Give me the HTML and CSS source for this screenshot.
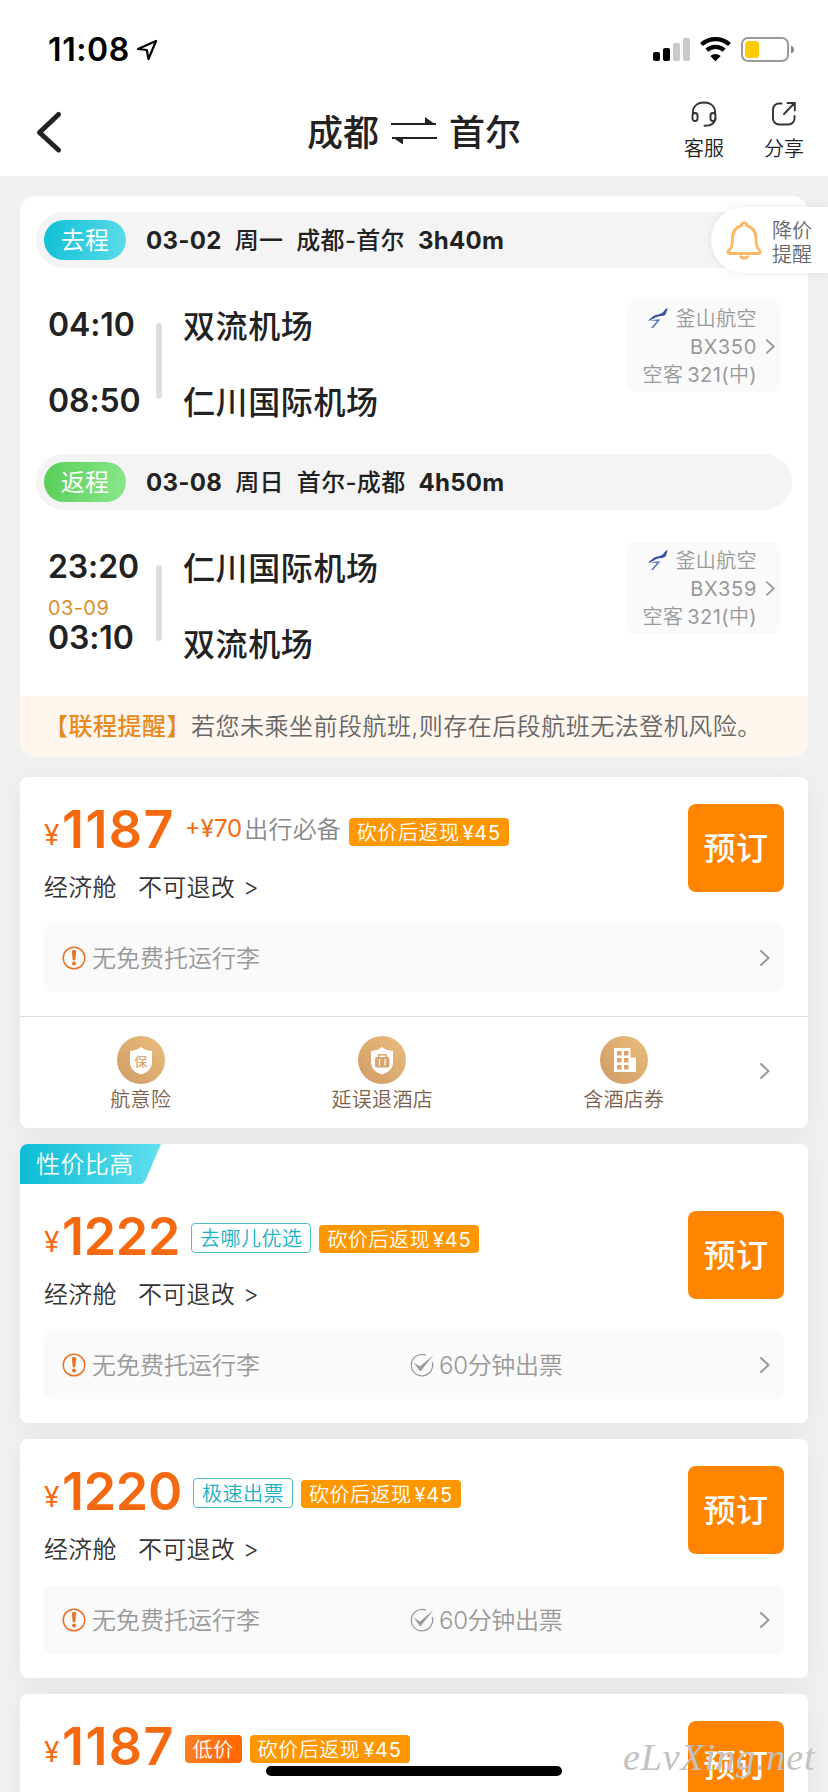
FILE: index.html
```html
<!DOCTYPE html>
<html lang="zh-CN">
<head>
<meta charset="utf-8">
<title>成都 ⇌ 首尔</title>
<link rel="stylesheet" href="styles.css">
</head>
<body>
<svg class="defs" width="0" height="0">
  <defs>
    <linearGradient id="gold" x1="0" y1="1" x2="1" y2="0"><stop offset="0" stop-color="#d19a66"/><stop offset="1" stop-color="#e9bf7e"/></linearGradient>
    <symbol id="chev" viewBox="0 0 12 18"><path d="M2 2l7.500 7-7.500 7" fill="none" stroke="#999" stroke-width="2" stroke-linecap="round" stroke-linejoin="round"/></symbol>
    <symbol id="warn" viewBox="0 0 24 24"><circle cx="12" cy="12" r="10.800" fill="none" stroke="#e8742a" stroke-width="1.500"/><path d="M9.900 5.500a2.100 1.800 0 0 1 4.200 0l-.8 8.700h-2.600z" fill="#e8742a"/><circle cx="12" cy="17.500" r="2" fill="#e8742a"/></symbol>
    <symbol id="tick" viewBox="0 0 24 24"><path d="M16 2.200A10.700 10.700 0 1 0 22.200 9" fill="none" stroke="#999" stroke-width="1.300"/><path d="M3.500 9.500l6.500 4L23.500 2 10.300 18.500z" fill="#999"/></symbol>
    <symbol id="bird" viewBox="0 0 20 20"><path d="M20 0c-1.500 2-1 5.500-3.500 7.200C13 8.500 10 7.500 6 10.500L0 13l1.500-2C4 10 4 8.500 7 7.200 11 6 14 6 16 3c1-1.500 2-2.600 4-3z" fill="#3c50a0"/><path d="M1 12.200l11.500-.9L5 20H3l6-7z" fill="#5573b8"/></symbol>
  </defs>
</svg>

<div class="screen">
  <div class="status">
    <span class="clock">11:08</span>
    <svg class="loc" width="22" height="22" viewBox="0 0 22 22"><path d="M2 10L20 2l-7.500 18-1.700-9z" fill="none" stroke="#000" stroke-width="2.200" stroke-linejoin="round"/></svg>
    <svg class="sys" width="144" height="28" viewBox="0 0 144 28">
      <rect x="0" y="15" width="7" height="9" rx="2"/><rect x="10" y="11" width="7" height="13" rx="2"/>
      <g fill="#c9c9c9"><rect x="20" y="6" width="7" height="18" rx="2"/><rect x="30" y="1" width="7" height="23" rx="2"/></g>
      <path d="M48.500 7.500a21 21 0 0 1 28 0M53.800 13.200a13 13 0 0 1 17.400 0" fill="none" stroke="#000" stroke-width="4.300"/>
      <path d="M57.300 19a8 8 0 0 1 10.400 0l-5.200 5.200z"/>
      <rect x="89" y="1" width="46" height="23" rx="6" fill="none" stroke="#9a9a9a" stroke-width="2"/>
      <rect x="92" y="4" width="14" height="17" rx="3.500" fill="#fc0"/>
      <path d="M138 8.500q3 1 3 4t-3 4z" fill="#8a8a8a"/>
    </svg>
  </div>

  <div class="nav">
    <svg class="back" width="28" height="44" viewBox="0 0 28 44"><path d="M23.500 4.500L4.500 22.500l19 17.500" fill="none" stroke="#222" stroke-width="5" stroke-linecap="round" stroke-linejoin="round"/></svg>
    <div class="title"><span>成都</span>
      <svg width="46" height="28" viewBox="0 0 46 28"><path d="M0 8h45M1 22h45" stroke="#222" stroke-width="2.200"/><path d="M34 1l11 8H34zM12 28.500L1 21h11z" fill="#222"/></svg>
      <span>首尔</span></div>
    <div class="act service">
      <svg width="26" height="26" viewBox="0 0 26 26" fill="none" stroke="#333" stroke-width="1.900" stroke-linecap="round"><path d="M2 13C1 6 6 1.500 13 1.500S25 6 24 13"/><rect x="1.500" y="12" width="5" height="8" rx="2.500"/><rect x="19.500" y="12" width="5" height="8" rx="2.500"/><path d="M24.300 17c-.3 6-4 7.800-10.800 7.800"/></svg>
      <span>客服</span></div>
    <div class="act">
      <svg width="26" height="26" viewBox="0 0 26 26" fill="none" stroke="#333" stroke-width="1.900" stroke-linecap="round"><path d="M10.500 2.500H8a6 6 0 0 0-6 6v9a6 6 0 0 0 6 6h9.500a6 6 0 0 0 6-6V15M13 13L23.500 2M16.500 2h7.300v7.500"/></svg>
      <span>分享</span></div>
  </div>

  <div class="list">
    <section class="trip">
      <div class="bar"><b class="pill go">去程</b><span>03-02</span><span>周一</span><span>成都-首尔</span><span>3h40m</span></div>
      <div class="leg">
        <div class="times"><div class="time">04:10</div><div class="time next">08:50</div></div>
        <i class="line"></i>
        <div class="ports"><div>双流机场</div><div>仁川国际机场</div></div>
        <div class="plane">
          <div class="info"><div><svg width="20" height="20"><use href="#bird"/></svg>釜山航空</div><div>BX350</div><div>空客<em>321(</em>中<em class="end">)</em></div></div>
          <svg width="11" height="17"><use href="#chev"/></svg>
        </div>
      </div>
      <div class="bar"><b class="pill return">返程</b><span>03-08</span><span>周日</span><span>首尔-成都</span><span>4h50m</span></div>
      <div class="leg">
        <div class="times"><div class="time">23:20</div><div class="date">03-09</div><div class="time">03:10</div></div>
        <i class="line"></i>
        <div class="ports"><div>仁川国际机场</div><div>双流机场</div></div>
        <div class="plane">
          <div class="info"><div><svg width="20" height="20"><use href="#bird"/></svg>釜山航空</div><div>BX359</div><div>空客<em>321(</em>中<em class="end">)</em></div></div>
          <svg width="11" height="17"><use href="#chev"/></svg>
        </div>
      </div>
      <div class="notice"><b>【联程提醒】</b>若您未乘坐前段航班,则存在后段航班无法登机风险。</div>
    </section>

    <section class="offer">
      <div class="main">
        <div class="left">
          <div class="price"><small>¥</small><strong class="wide">1187</strong><span class="plus">+¥70</span><span class="extra">出行必备</span><span class="tag">砍价后返现<em>¥45</em></span></div>
          <div class="cabin"><span>经济舱</span><span>不可退改</span><span>&gt;</span></div>
        </div>
        <button class="book">预订</button>
      </div>
      <div class="rule"><span class="bag"><svg width="24" height="24"><use href="#warn"/></svg>无免费托运行李</span><svg class="chev" width="12" height="18"><use href="#chev"/></svg></div>
      <div class="addons">
        <div class="addon">
          <svg width="48" height="48" viewBox="0 0 48 48"><circle cx="24" cy="24" r="24" fill="url(#gold)"/><path d="M24 11q4 3.500 11 4v11c0 6.500-4 10-11 12.500-7-2.500-11-6-11-12.500V15q7-.5 11-4z" fill="#fff"/><text class="bao" x="24" y="30" text-anchor="middle">保</text></svg>
          <span>航意险</span></div>
        <div class="addon">
          <svg width="48" height="48" viewBox="0 0 48 48"><circle cx="24" cy="24" r="24" fill="url(#gold)"/><path d="M24 11q4 3.500 11 4v11c0 6.500-4 10-11 12.500-7-2.500-11-6-11-12.500V15q7-.5 11-4z" fill="#fff"/><rect x="17" y="21" width="14.500" height="10.500" rx="2" fill="#d9a570"/><path d="M20.500 21v-2.300h7.500V21" fill="none" stroke="#d9a570" stroke-width="1.500"/><path d="M21.500 23v6.500M27 23v6.500" stroke="#fff" stroke-width="1.200"/></svg>
          <span>延误退酒店</span></div>
        <div class="addon">
          <svg width="48" height="48" viewBox="0 0 48 48"><circle cx="24" cy="24" r="24" fill="url(#gold)"/><path d="M14 12h16.500v9.500H36V36H14z" fill="#fff"/><g fill="#d9a570"><path d="M17 15h4.500v4.500H17zM24 15h4.500v4.500H24zM17 22h4.500v4.500H17zM24 22h4.500v4.500H24zM17 29h4.500v4.500H17zM24 29h4.500v4.500H24z"/></g></svg>
          <span>含酒店券</span></div>
        <svg class="chev" width="12" height="18"><use href="#chev"/></svg>
      </div>
    </section>

    <section class="offer">
      <div class="ribbon"><svg width="141" height="40" viewBox="0 0 141 40"><defs><linearGradient id="cy"><stop offset="0" stop-color="#0bbdd4"/><stop offset="1" stop-color="#62dff0"/></linearGradient></defs><path d="M0 0h141l-15 35q-2 5-6 5H0z" fill="url(#cy)"/></svg><span>性价比高</span></div>
      <div class="main">
        <div class="left">
          <div class="price"><small>¥</small><strong>1222</strong><span class="tag line-tag">去哪儿优选</span><span class="tag">砍价后返现<em>¥45</em></span></div>
          <div class="cabin"><span>经济舱</span><span>不可退改</span><span>&gt;</span></div>
        </div>
        <button class="book">预订</button>
      </div>
      <div class="rule"><span class="bag"><svg width="24" height="24"><use href="#warn"/></svg>无免费托运行李</span><span class="fast"><svg width="24" height="24"><use href="#tick"/></svg>60分钟出票</span><svg class="chev" width="12" height="18"><use href="#chev"/></svg></div>
    </section>

    <section class="offer">
      <div class="main">
        <div class="left">
          <div class="price"><small>¥</small><strong>1220</strong><span class="tag line-tag">极速出票</span><span class="tag">砍价后返现<em>¥45</em></span></div>
          <div class="cabin"><span>经济舱</span><span>不可退改</span><span>&gt;</span></div>
        </div>
        <button class="book">预订</button>
      </div>
      <div class="rule"><span class="bag"><svg width="24" height="24"><use href="#warn"/></svg>无免费托运行李</span><span class="fast"><svg width="24" height="24"><use href="#tick"/></svg>60分钟出票</span><svg class="chev" width="12" height="18"><use href="#chev"/></svg></div>
    </section>

    <section class="offer">
      <div class="main">
        <div class="left">
          <div class="price"><small>¥</small><strong class="wide">1187</strong><span class="tag low">低价</span><span class="tag">砍价后返现<em>¥45</em></span></div>
        </div>
        <button class="book">预订</button>
      </div>
    </section>
  </div>

  <div class="alert">
    <svg width="36" height="40" viewBox="0 0 36 40" fill="none" stroke="#ffb866" stroke-width="3" stroke-linejoin="round"><path d="M15.500 5.500a2.700 2.700 0 0 1 5.400 0C27 7.500 30 12 30 18c0 8 1 10 4 13 .8 1.500 0 2.500-1.500 2.500h-29C2 33.500 1.500 32.500 2.500 31c3-3 4-5 4-13 0-6 3-10.500 9-12.500z"/><path d="M14 36q4.200 4.500 8.500 0"/></svg>
    <span>降价<br>提醒</span>
  </div>
  <div class="home"></div>
  <div class="mark">eLvXing.net</div>
</div>
</body>
</html>
```
FILE: styles.css
```css
* { box-sizing: border-box; }
body { margin: 0; background: #f0f0f0; }
.defs { position: absolute; }
svg { display: block; flex: none; }
em { font-style: normal; }

.screen {
  position: relative;
  width: 828px;
  height: 1792px;
  overflow: hidden;
  background: #f1f1f1;
  color: #222;
  font-family: Inter, "Noto Sans CJK SC", sans-serif;
  font-weight: 350;
  white-space: nowrap;
}

.status { display: flex; height: 88px; padding: 0 31px 0 48px; background: #fff; }
.clock { width: 88px; padding-top: 30px; font-size: 32px; line-height: 40px; font-weight: 600; color: #000; letter-spacing: .6px; }
.loc { margin-top: 39px; }
.sys { margin: 37px 0 0 auto; }

.nav { display: flex; height: 88px; background: #fff; padding-right: 24px; }
.back { margin: 22px 0 0 35px; }
.title { display: flex; align-items: center; gap: 12px; width: 214px; height: 84px; margin-left: 244px; font-size: 36px; font-weight: 500; }
.act { display: flex; flex-direction: column; align-items: center; width: 40px; margin-left: 40px; padding-top: 13px; font-size: 20px; line-height: 30px; }
.act span { padding-top: 7px; }
.act.service { margin-left: auto; }

.list { display: flex; flex-direction: column; gap: 16px; padding: 20px; }

.trip { height: 561px; margin-bottom: 4px; border-radius: 16px; background: #fff; overflow: hidden; padding-top: 16px; }
.bar { display: flex; align-items: center; gap: 13px; height: 56px; margin: 0 16px; padding-left: 8px; border-radius: 28px; background: #f4f4f4; font-size: 24px; line-height: 40px; font-weight: 700; letter-spacing: .3px; }
.bar span { padding-top: 2px; }
.bar span:nth-of-type(2), .bar span:nth-of-type(3) { font-weight: 500; }
.pill { width: 82px; height: 40px; margin-right: 7px; border-radius: 20px; color: #fff; text-align: center; line-height: 42px; font-weight: 400; }
.go { background: linear-gradient(100deg, #0fbfd6, #5cdce8); }
.return { background: linear-gradient(100deg, #57ce57, #8be78c); }

.leg { display: flex; height: 186px; padding: 0 28px; }
.times { width: 108px; padding-top: 37px; }
.time { font-size: 32px; line-height: 40px; font-weight: 600; letter-spacing: -.1px; }
.time.next { margin-top: 36px; }
.date { margin: 9px 0 -2px; font-size: 20px; line-height: 24px; font-weight: 400; letter-spacing: .4px; color: #d8902f; }
.line { width: 6px; height: 76px; margin-top: 55px; border-radius: 3px; background: #dedede; }
.ports { display: flex; flex-direction: column; gap: 36px; padding: 39px 0 0 21px; font-size: 32px; line-height: 40px; font-weight: 500; letter-spacing: .6px; }
.plane { display: flex; align-items: center; gap: 8px; width: 153px; height: 92px; margin: 32px 0 0 auto; padding-right: 4px; border-radius: 8px; background: #fafafa; }
.info { flex: 1; padding-top: 1px; font-size: 20px; line-height: 28px; letter-spacing: .4px; text-align: right; color: #999; }
.info div { display: flex; justify-content: flex-end; }
.info div:nth-child(2) { font-weight: 400; letter-spacing: .7px; }
.info svg { margin: 3px 7px 0 0; }
.info em { margin-left: 4px; font-weight: 400; }
.info em.end { margin-left: 0; }

.notice { height: 61px; padding-left: 24px; background: #fff6ee; font-size: 24px; line-height: 61px; letter-spacing: .5px; color: #666; }
.notice b { font-weight: 500; color: #e68a1e; }

.offer { border-radius: 8px; background: #fff; box-shadow: 0 4px 28px rgba(0, 0, 0, .06); }
.offer:nth-of-type(n+2) { flex: none; }
.main { display: flex; justify-content: space-between; height: 147px; padding: 27px 24px 0 24px; }
.price { display: flex; height: 50px; color: #f56a10; }
.price small { width: 18px; font-size: 28px; line-height: 62px; font-weight: 400; }
.price strong { margin-right: 11px; font-size: 52px; line-height: 51px; font-weight: 600; letter-spacing: -.3px; }
.price strong.wide { margin-right: 10px; letter-spacing: 1.4px; }
.plus { font-size: 24px; line-height: 50px; margin-right: 2px; font-weight: 400; }
.extra { margin-right: 8px; font-size: 24px; line-height: 52px; letter-spacing: .2px; color: #888; }
.tag { height: 28px; margin: 14px 8px 0 0; padding: 0 8px; border-radius: 4px; background: #ff9800; color: #fff; font-size: 20px; line-height: 30px; letter-spacing: .5px; }
.tag em { margin-left: 3px; font-weight: 400; letter-spacing: .8px; }
.line-tag { height: 30px; margin-top: 12px; border: 1px solid #4cbfca; background: #fff; color: #18b0c4; line-height: 30px; }
.low { background: linear-gradient(100deg, #ff8125, #ff6600); }
.cabin { display: flex; margin-top: 18px; font-size: 24px; line-height: 32px; letter-spacing: .3px; color: #333; }
.cabin span:nth-child(2) { margin: 0 8px 0 21px; }
.book { width: 96px; height: 88px; padding: 0; border: 0; border-radius: 8px; background: #ff8500; color: #fff; font: 500 32px/90px Inter, "Noto Sans CJK SC", sans-serif; letter-spacing: .6px; }
.rule { display: flex; align-items: center; height: 68px; margin: 0 24px; padding: 0 13px 0 18px; border-radius: 8px; background: #fafafa; font-size: 24px; line-height: 69px; color: #999; }
.offer .rule:last-child { margin-bottom: 24px; }
.bag, .fast { display: flex; align-items: center; gap: 6px; }
.bag { width: 348px; }
.fast { gap: 5px; letter-spacing: -.3px; }
.chev { margin-left: auto; }
.addons { display: flex; height: 112px; margin-top: 24px; padding: 19px 37px 0 0; border-top: 1px solid #ddd; }
.addon { display: flex; flex-direction: column; align-items: center; width: 241.5px; font-size: 20px; line-height: 32px; letter-spacing: .3px; color: #7b614b; }
.addons .chev { margin-top: 26px; }
.bao { font: 500 13px "Noto Sans CJK SC", sans-serif; fill: #d9a570; }
.ribbon { display: grid; height: 40px; overflow: hidden; border-top-left-radius: 8px; font-size: 24px; line-height: 42px; color: #fff; letter-spacing: .4px; }
.ribbon > * { grid-area: 1 / 1; }
.ribbon span { padding-left: 16px; }

.alert { position: absolute; right: 0; top: 207px; display: flex; align-items: center; gap: 10px; width: 117px; height: 66px; padding-left: 15px; border-radius: 33px 0 0 33px; background: #fff; box-shadow: 0 0 10px rgba(0, 0, 0, .08); font-size: 20px; line-height: 24px; color: #666; }
.alert span { padding-top: 5px; }
.home { position: absolute; left: 266px; top: 1766px; width: 296px; height: 10px; border-radius: 5px; background: #000; }
.mark { position: absolute; left: 623px; top: 1735px; font: italic 38px/44px "Liberation Serif", serif; letter-spacing: .9px; color: #c2c2c2; }
```
